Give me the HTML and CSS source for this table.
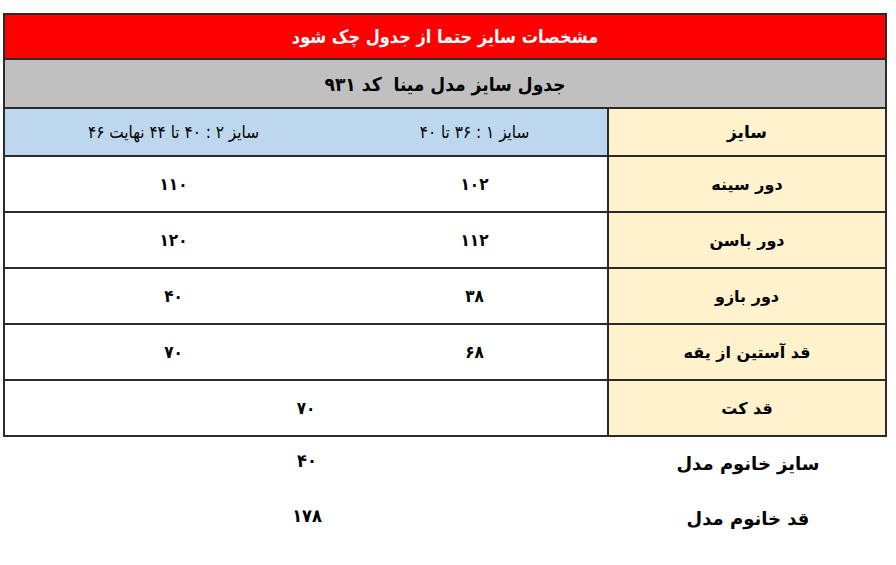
FILE: index.html
```html
<!DOCTYPE html>
<html lang="fa" dir="rtl">
<head>
<meta charset="utf-8">
<title>جدول سایز</title>
<link rel="stylesheet" href="styles.css">
</head>
<body>
<div class="page">
  <table class="size-table">
    <colgroup>
      <col class="c-label">
      <col class="c-mid">
      <col class="c-left">
    </colgroup>
    <tr class="row-title">
      <td colspan="3">مشخصات سایز حتما از جدول چک شود</td>
    </tr>
    <tr class="row-sub">
      <td colspan="3">جدول سایز مدل مینا&nbsp; کد ۹۳۱</td>
    </tr>
    <tr class="row-head">
      <td class="label">سایز</td>
      <td class="blue">سایز ۱ : ۳۶ تا ۴۰</td>
      <td class="blue">سایز ۲ : ۴۰ تا ۴۴ نهایت ۴۶</td>
    </tr>
    <tr class="row-data">
      <td class="label">دور سینه</td>
      <td>۱۰۲</td>
      <td>۱۱۰</td>
    </tr>
    <tr class="row-data">
      <td class="label">دور باسن</td>
      <td>۱۱۲</td>
      <td>۱۲۰</td>
    </tr>
    <tr class="row-data">
      <td class="label">دور بازو</td>
      <td>۳۸</td>
      <td>۴۰</td>
    </tr>
    <tr class="row-data">
      <td class="label">قد آستین از یقه</td>
      <td>۶۸</td>
      <td>۷۰</td>
    </tr>
    <tr class="row-data">
      <td class="label">قد کت</td>
      <td colspan="2">۷۰</td>
    </tr>
  </table>
  <div class="extra">
    <div class="extra-row">
      <div class="extra-label">سایز خانوم مدل</div>
      <div class="extra-value">۴۰</div>
    </div>
    <div class="extra-row">
      <div class="extra-label">قد خانوم مدل</div>
      <div class="extra-value">۱۷۸</div>
    </div>
  </div>
</div>
</body>
</html>
```

FILE: styles.css
```css
html, body {
  margin: 0;
  padding: 0;
  background: #ffffff;
}
body {
  font-family: "DejaVu Sans", "Noto Sans", sans-serif;
  color: #000;
}
.page {
  width: 896px;
  padding: 13px 9px 0 5px;
  box-sizing: border-box;
}
.size-table {
  width: 882px;
  border-collapse: collapse;
  table-layout: fixed;
  direction: rtl;
}
.c-label { width: 278px; }
.c-mid { width: 266px; }
.c-left { width: 338px; }
.size-table td {
  padding: 0;
  text-align: center;
  vertical-align: middle;
  font-weight: bold;
}
.row-title td {
  background: #ff0000;
  color: #ffffff;
  height: 43px;
  font-family: "DejaVu Sans Condensed", "DejaVu Sans", sans-serif;
  font-stretch: condensed;
  font-size: 18px;
  border: 2px solid #2b2b2b;
}
.row-sub td {
  background: #c0c0c0;
  height: 47px;
  font-family: "DejaVu Sans Condensed", "DejaVu Sans", sans-serif;
  font-stretch: condensed;
  font-size: 19px;
  border: 2px solid #2b2b2b;
}
.row-head td {
  height: 46px;
  border-top: 2px solid #2b2b2b;
  border-bottom: 2px solid #2b2b2b;
}
.row-head td.blue {
  background: #bdd7ee;
  font-family: "DejaVu Sans Condensed", "DejaVu Sans", sans-serif;
  font-stretch: condensed;
  font-weight: normal;
  font-size: 17px;
}
.row-head td:last-child { border-left: 2px solid #2b2b2b; }
.size-table td.label {
  background: #fff2cc;
  border-right: 2px solid #2b2b2b;
  border-left: 2px solid #2b2b2b;
  font-family: "DejaVu Sans", sans-serif;
  font-stretch: normal;
  font-size: 16px;
}
.row-head td.label { font-size: 17px; }
.row-data td {
  height: 54px;
  border-top: 2px solid #2b2b2b;
  border-bottom: 2px solid #2b2b2b;
  font-family: "DejaVu Sans Condensed", "DejaVu Sans", sans-serif;
  font-stretch: condensed;
  font-size: 17px;
}
.row-data td:last-child { border-left: 2px solid #2b2b2b; }
.extra {
  width: 882px;
  direction: rtl;
}
.extra-row {
  display: grid;
  grid-template-columns: 278px 604px;
  height: 55px;
  align-items: center;
  font-weight: bold;
  font-size: 18px;
}
.extra-label {
  text-align: center;
  padding-bottom: 3px;
}
.extra-value {
  text-align: center;
  font-family: "DejaVu Sans Condensed", "DejaVu Sans", sans-serif;
  font-stretch: condensed;
  font-size: 18px;
  padding-bottom: 8px;
}
```
